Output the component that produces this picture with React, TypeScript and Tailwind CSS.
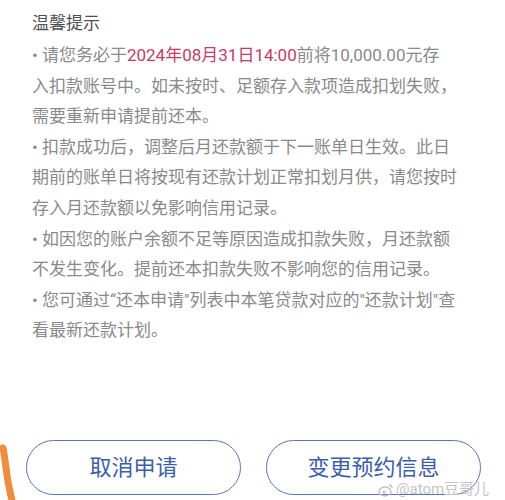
const font = {
    fontFamily: 'Roboto, "Noto Sans CJK SC", sans-serif',
};

function Highlight({ children }: { children: React.ReactNode }) {
    return <span className="text-[#c93a63]">{children}</span>;
}

export default function App() {
    return (
        <div
            className="relative w-[505px] h-[500px] bg-white overflow-hidden"
            style={font}
        >
            <div className="px-[32px] pt-[10px] text-[17px] leading-[30.6px] text-[#8a8a8a]">
                <h2 className="text-[#4f4f4f] text-[17px] leading-[26px] mb-[4px]">温馨提示</h2>
                <p>
                    • 请您务必于<Highlight>2024年08月31日14:00</Highlight>前将10,000.00元存
                    <br />
                    入扣款账号中。如未按时、足额存入款项造成扣划失败，
                    <br />
                    需要重新申请提前还本。
                </p>
                <p>
                    • 扣款成功后，调整后月还款额于下一账单日生效。此日
                    <br />
                    期前的账单日将按现有还款计划正常扣划月供，请您按时
                    <br />
                    存入月还款额以免影响信用记录。
                </p>
                <p>
                    • 如因您的账户余额不足等原因造成扣款失败，月还款额
                    <br />
                    不发生变化。提前还本扣款失败不影响您的信用记录。
                </p>
                <p>
                    • 您可通过“还本申请"列表中本笔贷款对应的"还款计划"查
                    <br />
                    看最新还款计划。
                </p>
            </div>

            <div className="absolute left-[26px] top-[440px] flex gap-[25px]">
                <button
                    type="button"
                    className="w-[215px] h-[55px] rounded-full border border-[#5a74b8] text-[#3d5db0] text-[22px] flex items-center justify-center"
                >
                    取消申请
                </button>
                <button
                    type="button"
                    className="w-[215px] h-[55px] rounded-full border border-[#5a74b8] text-[#3d5db0] text-[22px] flex items-center justify-center"
                >
                    变更预约信息
                </button>
            </div>

            {/* orange edge swipe handle */}
            <svg
                className="absolute left-0 top-[444px]"
                width="16"
                height="56"
                viewBox="0 0 16 56"
            >
                <path
                    d="M3 4 C 6 18, 6 34, 12 56"
                    stroke="#f08c3c"
                    strokeWidth="7"
                    strokeLinecap="round"
                    fill="none"
                />
            </svg>

            {/* watermark */}
            <div className="absolute left-[378px] top-[481px] flex items-center gap-[2px] text-[15px] leading-[17px] text-[#c4c4c4]">
                <svg width="16" height="14" viewBox="0 0 16 14">
                    <ellipse cx="7" cy="8.5" rx="6" ry="4.5" fill="none" stroke="#c4c4c4" strokeWidth="1.4" />
                    <circle cx="6" cy="9" r="1.6" fill="#c4c4c4" />
                    <path d="M11 2 a3 3 0 0 1 3 3" stroke="#c4c4c4" strokeWidth="1.3" fill="none" />
                </svg>
                <span>@atom豆哥儿</span>
            </div>
        </div>
    );
}
